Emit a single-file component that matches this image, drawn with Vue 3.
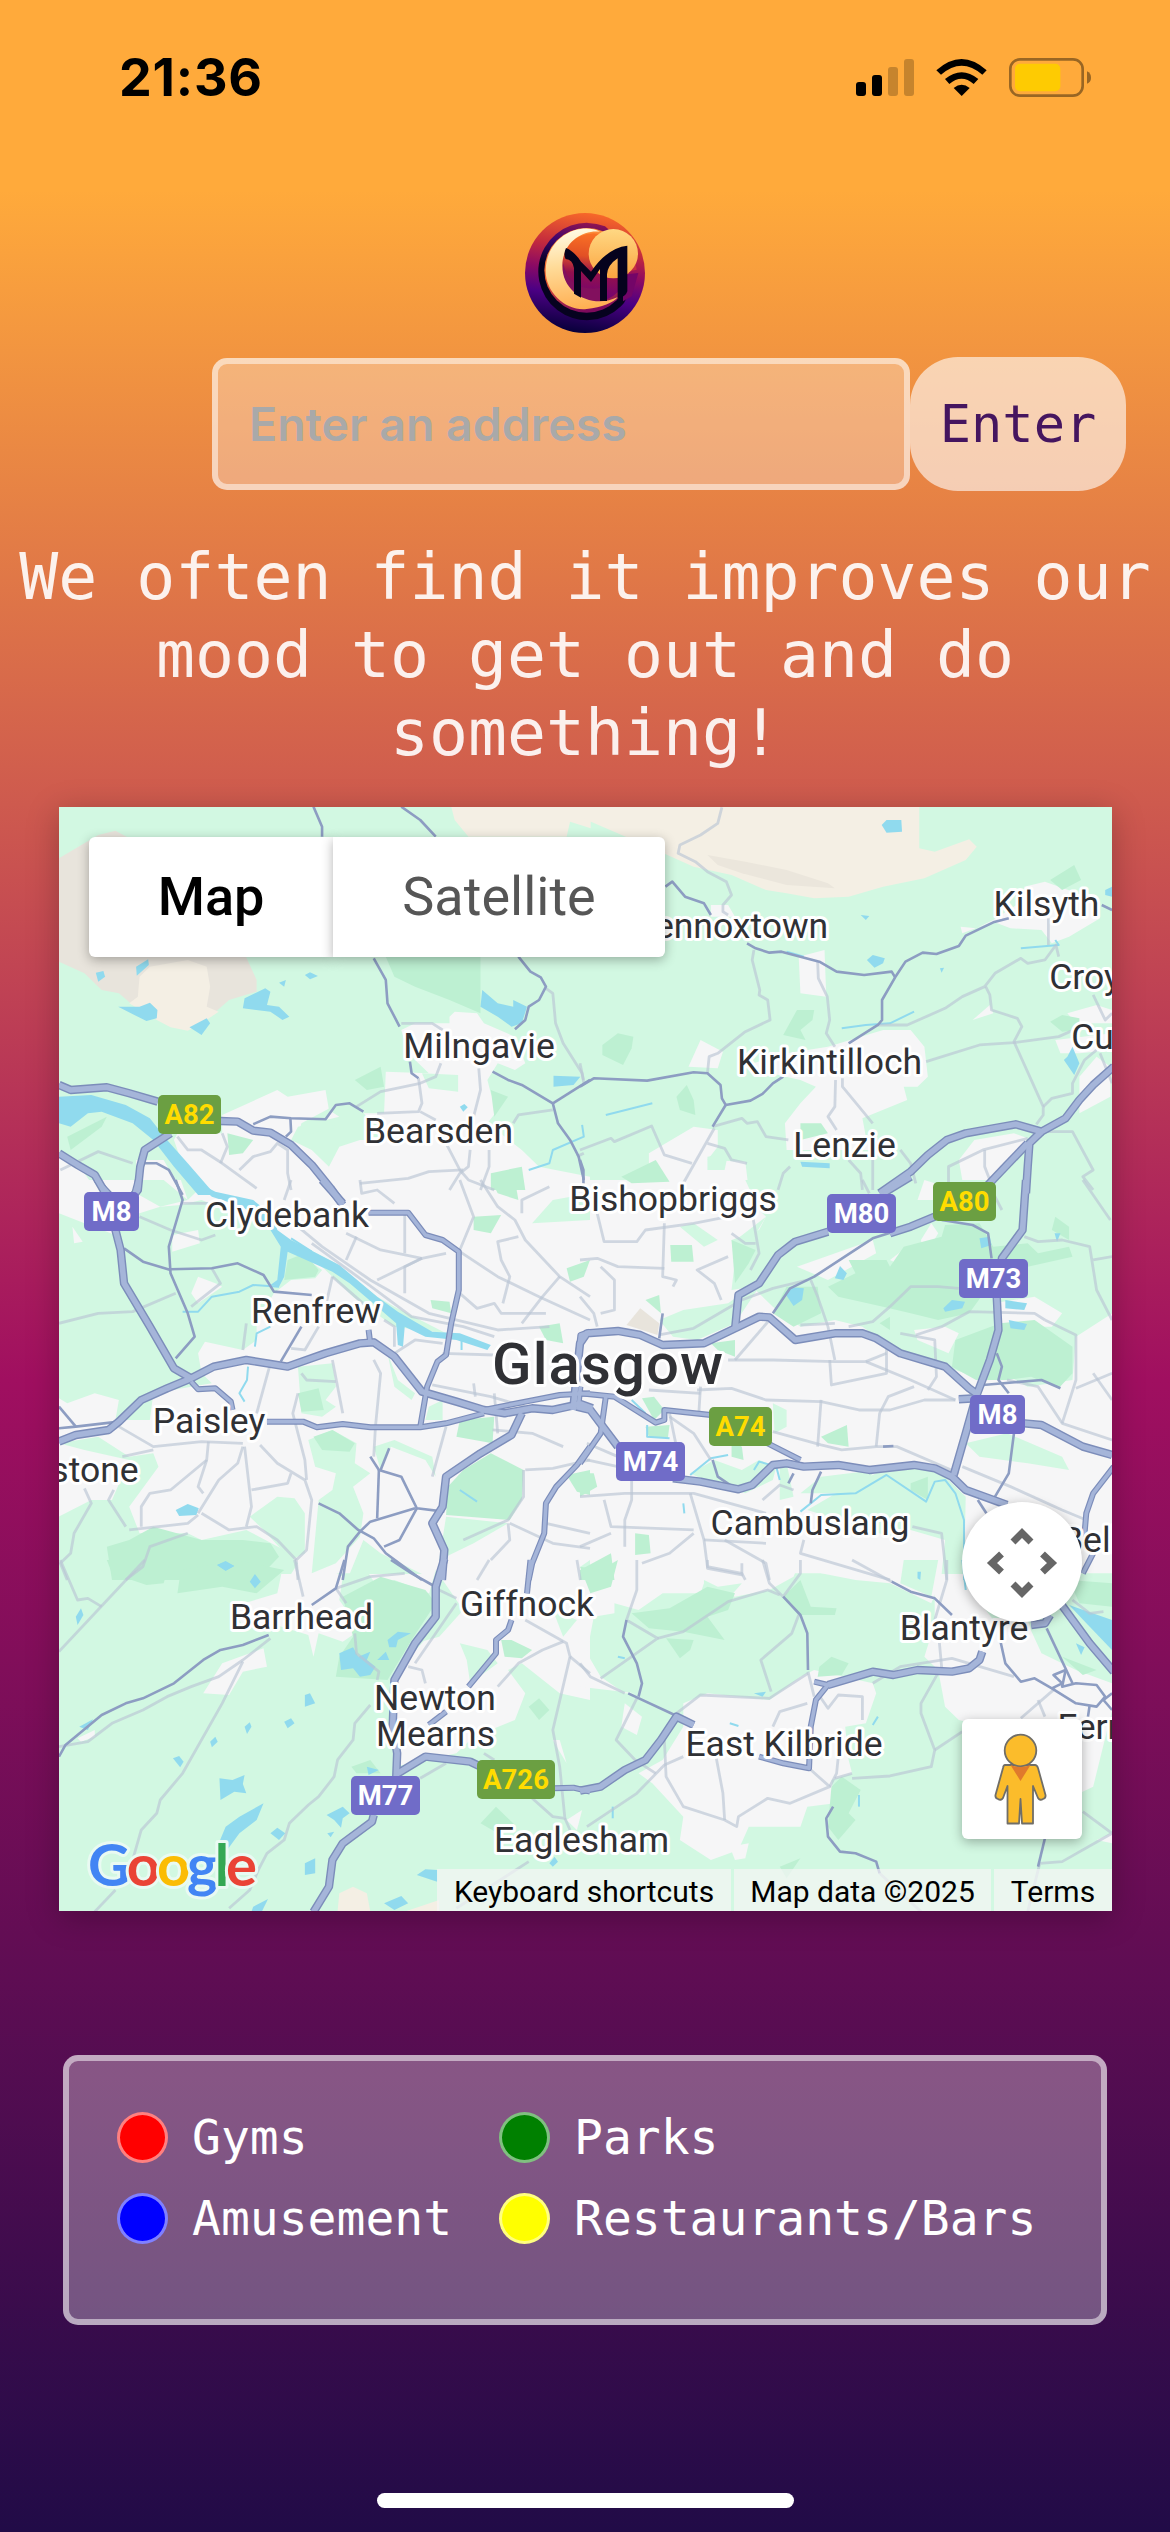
<script setup>
// Map sheets: every sheet holds its own shapes, in sheet units.
const sheets = [
  {
    id: 'nw', x: -9, y: -17,
    urban: ['1020,720 1060,700 1160,700 1160,680 1175,665 1240,670 1260,700 1350,740 1380,820 1350,840 1300,820 1270,870 1280,910 1300,960 1270,1000 1370,1080 1420,1130 1568,1160 1568,1200 810,1200 810,1130 840,1070 900,1050 1000,1050 910,970 970,970 975,845 1100,850 1040,790', '500,975 660,900 690,920 800,900 810,960 840,980 720,1010 700,1050 760,1080 810,1130 810,1200 490,1200 420,1180 380,1110 360,1050 370,1030 500,1030', '26,1100 80,1120 120,1180 200,1200 26,1200', '250,1110 330,1110 380,1200 250,1200'],
    green: ['1080,850 1185,855 1185,905 1100,895', '730,1000 820,950 800,1000 840,1010 720,1040'],
    park: ['975,500 1250,500 1250,670 1160,630 1060,590 1000,560', '885,870 960,830 970,890 920,900', '50,1040 165,980 150,1010 60,1080', '515,1030 590,1050 560,1090 520,1095', '1280,900 1330,920 1290,980', '1280,1150 1370,1130 1380,1200 1280,1200'],
    rock: ['26,205 140,135 190,122 240,150 560,480 600,570 600,605 520,630 470,675 440,690 240,645 200,610 150,600 100,550 26,515'],
    moor: ['290,530 400,510 455,530 465,590 455,650 490,665 440,700 400,722 350,712 310,690 230,640 255,620 260,560', '1165,50 1570,50 1570,115 1510,95 1500,140 1215,140 1175,90'],
    water: ['26,920 120,915 220,945 290,985 340,1050 400,1120 480,1215 430,1215 360,1130 300,1050 240,1000 150,965 110,970 60,1010 26,1000', '1255,600 1300,640 1345,650 1345,630 1385,650 1370,700 1340,710 1300,680 1250,650', '560,655 565,625 625,595 640,605 630,645 665,650 695,680 675,690 640,665', '198,650 260,650 290,638 312,660 310,685 280,693 245,675', '405,712 455,685 465,700 440,735', '250,530 285,508 287,525 252,557', '133,548 155,543 160,560 140,575', '740,555 755,547 778,558 755,568', '665,578 685,570 680,590', '1462,857 1540,860 1520,885 1462,890', '1190,950 1203,942 1213,952 1200,965'],
    stream: ['1545,1005 1550,1040 1460,1080 1450,1120 1390,1140'],
    local: ['1440,595 1460,610 1468,700 1490,760 1545,850 1550,880', '1020,700 1110,700 1140,720', '890,950 960,905 1075,880 1120,860 1135,820', '1070,865 1080,940 1070,965 950,970', '1075,965 1120,990', '1245,835 1250,900 1230,980', '1345,1000 1360,975 1460,960', '1150,1060 1190,1140 1215,1170 1290,1200', '1220,1080 1215,1130 1190,1150 1160,1200', '1275,1080 1275,1130 1250,1200', '900,1180 1040,1165 1100,1145 1200,1140', '370,1040 400,1080 440,1080 500,1120 560,1165 600,1195', '500,1030 515,1070 495,1120', '550,1140 590,1100 640,1085 660,1060 690,1080 690,1150 700,1200', '30,1140 140,1085 240,1120', '1550,1090 1530,1100'],
    minor: ['765,50 790,110 790,140', '1020,50 1075,90 1120,140', '940,505 975,570 980,640 1015,710', '1360,500 1395,545 1425,562 1440,590 1420,630 1390,650 1380,690 1350,718', '1045,815 1050,850 1070,865', '1285,845 1330,870 1370,885 1460,940 1475,1000 1510,1050 1535,1100 1550,1170', '1460,940 1568,870', '590,1003 640,980 700,985 800,988 830,945 870,940 910,965', '698,985 700,1025 685,1040', '255,1120 310,1120 345,1140 385,1215'],
    main: ['26,885 60,900 165,892 230,910 313,935', '495,993 545,995 590,1022 640,1028 700,1065 760,1125 815,1195 850,1245', '26,1090 80,1125 130,1155 155,1200 175,1240', '350,1030 275,1080 262,1130 255,1200 240,1220']
  },
  {
    id: 'ne', x: 521, y: -17,
    urban: ['380,345 430,345 450,380 380,380', '635,500 710,480 715,620 640,610', '1105,410 1150,415 1200,390 1290,330 1290,290 1350,275 1500,330 1510,385 1420,440 1370,460 1340,420 1250,415 1200,395 1110,430', '315,830 350,750 415,785 400,835', '470,830 600,790 720,770 880,720 960,720 1000,770 1010,860 980,890 940,890 950,930 820,985 830,1040 900,1080 600,1080 595,1000 640,940 685,890 640,870', '200,1090 330,1010 400,1020 400,1070 370,1110 480,1115 490,1200 200,1200', '1140,690 1190,645 1200,670', '1415,670 1500,645 1545,660 1545,700 1440,700', '1380,750 1545,730 1545,780 1450,790 1395,790', '1450,860 1500,800 1540,830 1540,920 1450,970', '1145,1050 1260,1030 1300,1045 1190,1175 1110,1170 1100,1110'],
    green: ['370,1100 430,1090 420,1140 370,1140'],
    park: ['65,765 110,730 155,740 150,775 125,825 65,795', '280,920 310,885 330,930 335,975 290,960', '630,660 680,660 675,690 640,720 655,750 590,735', '1365,270 1435,225 1455,270 1400,300', '1365,695 1400,675 1450,685 1450,720 1400,725', '640,1000 700,1000 720,1030 640,1050', '120,1160 220,1110 260,1175 150,1180'],
    rock: [],
    moor: ['-6,50 985,50 985,175 1030,185 1130,148 1152,170 1120,210 1000,265 880,290 780,320 680,325 600,310 540,300 440,255 330,230 200,170 20,90 -6,75'],
    ridge: ['370,195 480,215 600,240 720,280 740,295 600,285 470,250 400,225'],
    water: ['876,105 890,90 933,90 935,125 890,128', '833,510 850,495 885,505 880,520 855,533', '1415,800 1430,770 1450,820 1435,855 1405,810', '815,375 840,378 830,390', '640,1115 725,1120 725,1135 645,1130', '1525,300 1545,290 1545,320 1525,315', '1045,535 1057,533 1050,548'],
    stream: ['760,715 830,705 900,700 970,665', '75,975 210,940', '600,485 650,500', '1280,475 1390,465 1380,450'],
    local: ['412,52 400,100 350,135 290,165 285,190 335,215 370,245 425,275 440,315 415,345 415,365 430,375', '505,480 500,510 522,600 520,615 545,630 552,690 480,725 400,790 375,800 370,850', '690,515 692,565 718,620 725,690 715,730 740,770', '865,705 950,705 1060,655 1110,620 1175,590 1205,550 1280,505 1300,520 1350,510 1382,465 1390,500', '1178,590 1190,615 1195,660 1270,685 1283,710 1260,755 1345,950 1345,975 1325,1003', '1005,815 1160,765 1260,758 1390,740 1445,715', '1360,385 1360,465', '1345,950 1370,925 1430,910 1430,880 1465,810 1500,780', '1490,615 1525,690 1545,670', '742,870 740,950 720,980 745,1020', '762,865 762,890 810,950 850,1000', '385,1010 470,985 485,1000 515,995 540,1040 605,1050', '0,1080 90,1045 100,1055 208,1008 245,1095 325,1120', '390,1015 300,1180', '370,1060 420,1075 440,1110 485,1120', '610,1130 590,1150 575,1200', '780,1110 815,1150 820,1200', '850,1110 850,1200', '930,1080 960,1120 975,1180', '1070,1200 1070,1130 1170,1080 1300,1045', '1175,1080 1175,1130 1190,1170', '1340,1025 1430,1025 1490,1140 1460,1160 1490,1200', '0,820 10,870', '1510,790 1545,880'],
    minor: ['248,290 268,275 305,320 360,340 380,375', '485,460 510,475 550,488 585,485 695,515 745,545 825,555 905,545 915,562', '780,760 865,705 877,690 877,630 915,562 945,515 995,488 1035,492 1100,468 1120,437 1200,397 1245,385', '0,890 40,865 195,872 330,847 370,850 408,885 412,925 423,945 385,1010', '423,945 495,932 530,912 560,880 590,860', '1515,345 1545,360', '0,1110 10,1140 10,1200'],
    main: ['870,1210 960,1145 1010,1095 1065,1050 1120,1030 1200,1015 1265,1003 1340,1025 1410,985 1450,930 1490,885 1550,830', '1340,1025 1305,1060 1300,1130 1295,1210', '1300,1060 1240,1125 1180,1190']
  },
  {
    id: 'w', x: -9, y: 373,
    urban: ['26,0 1568,0 1568,1180 26,1180'],
    green: ['26,100 100,130 190,165 215,110 260,100 320,80 380,75 440,60 650,150 680,190 790,270 770,295 700,300 650,340 600,430 600,480 560,510 450,485 430,520 440,580 470,610 300,640 290,720 190,720 200,660 130,640 50,670 26,655', '250,0 330,0 400,60 320,80 250,40', '26,790 140,770 230,830 300,820 315,860 230,980 260,1060 400,1060 440,1080 570,1050 680,1110 720,1150 700,1182 26,1182 26,1010 120,960 180,960 230,840 100,810', '580,1010 660,950 710,955 740,1000 740,1120 700,1140 620,1050', '750,780 820,750 890,790 885,850 930,880 880,920 910,1000 900,1070 830,1150 760,1180 780,960 820,930 830,880 770,860', '940,800 1000,780 1110,830 1120,890 1090,840 990,800 960,870', '980,520 1010,600 1060,640 1050,660 1000,620', '1100,680 1140,660 1140,720 1090,720', '720,560 820,550 830,620 800,660 830,680 790,710 730,700', '1150,1010 1330,1030 1230,1090 1130,1140', '700,180 830,250 950,350 1000,380 1150,460 1000,440 880,350 800,270', '1400,130 1460,60 1568,40 1568,120', '400,0 440,20 400,60 380,0', '910,1080 960,1120 1080,1182 870,1182'],
    hole: ['355,165 430,150 435,190 355,215', '430,290 480,310 500,320 430,370 410,340', '65,140 95,185 70,190', '640,440 700,430 740,450 690,540 600,540'],
    park: ['1190,720 1290,710 1285,790 1180,770', '690,240 740,220 780,270 770,290 680,300', '1105,360 1160,365 1165,400 1110,385', '720,640 780,625 795,690 730,695', '1280,820 1375,870 1370,960 1335,1020 1150,1005 1155,920 1200,870', '165,1100 230,1080 300,1040 440,1080 560,1080 640,1090 665,1130 600,1200 180,1200', '765,770 820,750 885,790 870,815 790,810', '1500,885 1568,870 1568,945 1530,935', '1230,110 1310,105 1280,160 1230,150', '1500,265 1568,240 1550,290 1510,305', '1420,440 1480,430 1490,490 1440,480', '1280,0 1350,0 1360,60 1300,40'],
    rock: [], moor: [],
    water: ['415,0 480,35 590,60 650,110 660,150 700,180 840,255 950,350 1010,395 1110,455 1190,460 1280,495 1270,510 1180,480 1090,470 1030,440 1025,500 1010,495 1005,430 950,380 870,310 820,275 690,215 680,290 665,320 640,315 660,300 670,200 640,150 560,80 470,50', '365,990 400,972 432,985 425,1005 375,1008', '485,1155 510,1143 535,1158 510,1172'],
    stream: ['665,320 590,315 550,335 470,350 430,395 385,395', '640,440 600,460 595,500', '575,560 572,600 550,640 565,665', '1190,930 1240,965', '700,175 760,215', '1195,480 1195,510'],
    local: ['26,430 140,400 240,395 365,340', '380,70 460,70', '260,110 350,150 440,180 480,165', '470,265 495,310 410,380', '700,0 680,60', '720,140 790,200 930,300 1100,400 1300,450 1450,440', '760,190 920,310 1050,410 1200,440 1290,470', '900,0 905,40 950,30 1000,70', '1190,0 1230,110 1190,210', '1250,0 1300,80 1350,120 1380,180 1480,290 1568,350', '1190,215 1300,290 1420,350 1568,420', '890,170 860,240', '860,160 960,210 1080,235 1150,220', '1080,235 1030,260 1030,340', '1030,90 1030,220', '1080,235 950,300', '1360,170 1300,185 1310,240 1335,290 1315,370', '1480,290 1430,350 1370,430', '1370,100 1370,60 1450,20', '1190,340 1240,385 1290,370 1310,400 1440,400', '820,290 800,380', '820,290 920,380', '1000,520 1060,480 1140,490', '1110,615 1280,650 1380,680', '1140,520 1290,525', '820,540 850,700', '940,540 960,580 945,740 940,830', '640,550 600,700', '570,430 560,510', '780,440 740,510 700,505', '730,580 745,600 830,605', '720,640 705,700 740,840 745,900', '200,740 300,800 440,785 560,790', '210,830 300,810', '460,785 455,840 350,930 290,940 265,980 265,1040', '455,840 430,920 445,940', '560,800 545,850 490,900 430,1000', '565,800 585,980 570,1040', '610,795 660,850 740,900 760,960 745,1110 715,1140 720,1200', '440,1000 520,1050 600,1040 660,1080 715,1140', '230,1050 400,1030 430,1005', '100,925 120,970 70,1060 60,1120 30,1150 50,1200', '185,930 170,960 220,1040', '400,1060 290,1100 270,1160 220,1200', '585,930 690,910 700,880', '1150,740 1110,890', '1285,750 1400,760 1490,800', '1380,870 1460,865 1568,840', '1375,870 1375,950 1330,1020 1200,1080', '1335,1030 1460,1090 1568,1105', '1330,1030 1335,1080 1280,1140', '1440,1030 1568,1060', '970,420 1000,440 1000,500', '1230,610 1235,650', '1290,640 1300,760'],
    minor: ['350,268 470,265 545,250 620,285 650,335 760,345', '215,205 270,245 350,270', '365,0 385,60 345,200 350,280 400,400 420,470 365,535', '730,440 670,545', '930,830 955,870 1020,890 1065,985 1145,995', '955,870 950,1015', '780,970 840,1000 895,1050 940,1075 975,1120 1080,1200', '1060,985 930,1025 900,1055 865,1100 850,1200', '26,745 75,740 200,725', '26,680 75,740', '960,870 985,805', '1065,985 1015,1080 970,1100'],
    main: ['190,150 205,210 215,310 290,440 360,565 410,595 475,560 570,540 690,560 800,520 900,490 940,487 1000,530 1080,635 1180,665 1260,690 1320,700 1400,685 1460,690 1540,672 1575,685', '26,785 75,765 170,750 200,725 265,660 340,625 410,595', '790,0 850,70', '1370,700 1340,765 1250,820 1150,890 1140,980 1110,1030 1145,1110 1138,1200'],
    trunk: ['410,605 430,628 480,625 525,665 530,690', '630,725 735,725 775,742 850,732 930,742 1075,742 1150,730 1260,700', '925,98 1040,98 1090,165 1140,180 1187,215 1187,330 1165,430 1150,525 1125,545 1095,620 1075,740', '1568,800 1530,855 1470,920 1440,970 1435,1060 1400,1150 1390,1200', '1260,690 1380,665 1480,645 1568,640', '1540,620 1535,670', '1568,455 1540,465 1535,510', '925,450 930,490', '135,0 180,50', '255,0 245,40']
  },
  {
    id: 'e', x: 521, y: 373,
    urban: ['0,0 1545,0 1545,1180 0,1180'],
    green: ['430,0 1545,0 1545,400 1440,470 1430,600 1300,620 1230,580 1180,600 1060,560 900,500 820,440 740,420 640,440 560,380 500,320 440,330 450,240 440,180 520,150 540,110', '290,140 330,130 400,180 360,200', '230,420 300,390 430,370 540,290 450,430 340,480 270,470', '560,670 600,690 600,740 565,760', '320,880 390,840 470,870 520,840 570,860 560,900 480,940 360,900', '660,990 760,930 860,880 1000,860 1050,880 1120,950 1115,1182 1050,1182 1060,1080 960,1050 900,1070 690,1000', '640,940 700,890 860,870 800,940', '1120,790 1240,760 1400,830 1420,870 1300,850 1160,830', '500,180 440,190 540,110', '580,860 600,850 620,950 580,960'],
    hole: ['630,260 850,180 860,220 720,300', '900,240 950,200 960,270', '1200,370 1320,350 1400,400 1370,440 1220,440', '970,450 1060,440 1100,460 1070,520 980,480', '430,0 480,0 520,90 440,140 400,110', '1000,0 1030,10 1030,60 980,60', '990,180 1020,130 1040,160 1000,230'],
    park: ['262,195 325,195 330,245 265,245', '440,180 510,210 490,250 450,310', '380,490 450,480 450,530 400,510', '180,655 215,650 245,690 215,720', '190,740 260,735 255,775 200,770', '700,770 775,735 780,800 720,790', '440,780 470,800 475,840 440,830', '0,880 40,880 50,920 0,950', '160,1060 200,1065 205,1120 160,1125', '0,1170 90,1120 100,1200 0,1200', '720,320 800,280 780,240 890,240 900,260 940,200 1050,170 1060,135 1160,130 1200,200 1300,190 1330,220 1420,200 1430,230 1300,260 1200,300 1130,400 1040,420 960,400 880,380 750,350', '1090,480 1220,430 1320,420 1430,500 1430,580 1390,625 1310,590 1240,600 1150,600 1080,560', '560,400 600,320 690,320 700,400 620,440', '960,910 1010,890 1010,960 960,930', '1380,110 1420,140 1420,180 1370,150', '870,430 900,410 900,450', '190,360 230,345 235,400'],
    rock: ['135,435 175,385 230,430 225,465'], moor: [],
    water: ['595,340 610,322 650,325 645,360 620,378', '740,295 755,258 775,280 765,300', '1160,175 1190,170 1195,195 1165,205', '1055,385 1080,360 1118,365 1110,385 1060,395', '1235,360 1298,370 1290,390 1235,385', '1245,420 1298,432 1290,450 1250,445', '1378,160 1395,160 1385,185'],
    stream: ['640,995 700,945 800,940 890,885 1005,965 1030,905 1060,900 1090,940 1115,1020 1115,1200', '320,885 380,835 430,825', '150,660 190,700', '195,735 195,770 260,775', '505,870 520,845 570,860 580,900', '300,970 303,1000'],
    local: ['245,130 240,290 280,300 270,320', '500,100 520,220 495,270', '0,240 50,235 110,260 245,265', '50,100 70,185 165,185 190,150 330,130 430,110', '60,260 100,300 100,390 60,400', '0,350 40,400 50,440', '440,160 480,190 510,190', '430,230 340,270 390,310 410,360', '670,300 690,350 720,440 740,540', '550,420 450,540', '430,540 560,540 740,545 830,545 960,600 1090,660', '230,465 330,445 470,360 560,325 660,300', '900,380 960,320 1040,320 1100,325', '780,440 850,425 900,380', '975,465 1050,440 1130,395 1320,400 1350,420', '640,435 740,430', '830,545 890,520', '890,500 890,580 730,615 725,540', '340,630 440,625 540,660 700,665 810,690 900,690 1000,660 1090,660', '970,620 895,650 870,700 860,800', '700,660 690,800', '560,755 700,795 760,810 860,800 920,800 1100,880', '930,460 1030,480 1035,590 1010,630', '1290,170 1330,185 1400,180 1480,200 1500,330 1545,420', '1490,240 1545,230', '1350,420 1440,465 1440,600 1400,730', '1440,625 1545,580', '1490,580 1545,660', '1110,860 1250,920 1400,990 1470,1020', '1240,600 1330,620 1400,730 1545,780', '0,950 130,940 330,940 540,1000', '150,900 150,960 130,1020 130,1100', '320,940 360,1080 370,1160 470,1180 480,1200', '70,960 90,1040 330,1050', '360,1080 540,1090', '420,1080 540,1150 550,1200', '650,1080 640,1120 900,1200', '530,960 580,915 620,930', '965,1040 1050,1060 1065,1200', '0,1100 90,1060', '180,1150 260,1120 330,1060', '350,620 345,700', '200,630 350,640', '260,710 330,760 380,840', '260,700 280,800', '20,790 110,830', '20,840 110,860', '1460,0 1540,120', '820,0 840,40', '1200,40 1225,90'],
    minor: ['910,155 850,175 680,290 610,325 560,400', '230,475 240,400', '385,840 400,890 450,925', '700,875 675,930 670,970', '1170,615 1340,600 1395,625', '1210,520 1225,560 1215,600 1245,640', '1260,760 1245,880 1205,950', '1050,120 1140,135 1185,160 1195,235', '1155,960 1180,1000', '620,880 605,910', '880,800 910,798'],
    main: ['-20,690 0,490 20,460 110,453 175,465 240,495 360,490 440,450 520,410 550,412 625,480 740,460 820,460 860,475 930,520 1060,560 1130,625 1150,640', '450,450 460,345 520,310 575,225 625,185 720,155', '880,40 960,-10', '900,160 960,140 1030,110', '1295,0 1285,150 1225,235 1210,350 1215,450 1190,540 1150,650 1120,760 1085,885', '1290,730 1340,735 1460,800 1545,825', '-10,680 30,690 110,800', '270,895 350,905 460,928 500,915 560,855 600,850 650,860 750,855 840,870 970,855 1030,865 1080,890 1120,930 1240,975', '1100,658 1150,655'],
    trunk: ['0,640 100,650 220,728 245,720 245,690 380,705', '545,790 640,840', '1550,860 1490,940 1470,1000 1465,1060 1490,1120 1460,1180', '75,650 60,760 0,850', '1190,20 1180,30']
  },
  {
    id: 'sw', x: -9, y: 753,
    urban: ['680,0 770,0 850,50 840,120 900,210 850,245 780,220 765,290 750,225 640,190 560,200 530,140 660,100', '900,0 1568,0 1568,420 1480,400 1370,310 1330,330 1380,400 1350,480 1230,530 1180,580 1000,620 1000,360 1020,320 1130,190 1100,100 1000,60 950,80', '500,310 620,265 630,320 560,335 520,405 445,400', '80,535 130,510 130,530 90,545', '1500,780 1545,750 1530,810', '1460,540 1480,540 1500,610'],
    green: ['1190,250 1270,270 1300,310 1220,370 1210,300', '1460,150 1530,180 1490,230', '1120,30 1200,150 1130,230 1060,250', '1540,20 1568,0 1568,80'],
    park: ['165,0 350,0 330,70 280,75 180,40', '380,30 540,0 680,30 600,100 500,80 370,100', '1390,440 1420,415 1450,450 1420,480', '1250,790 1295,740 1350,795 1300,820', '875,620 930,600 960,640 890,640', '850,110 960,50 1090,90 1120,130 1050,240 980,360 830,350 840,290 880,230', '1310,240 1340,240 1400,270 1370,295 1320,290'],
    rock: [], moor: ['840,1000 880,980 920,1000 930,1055 835,1055', '1030,1055 1130,1020 1130,1055'],
    water: ['840,280 880,262 895,290 930,275 920,300 945,320 930,345 900,350 880,325 845,330', '980,240 1010,215 1048,220 1010,240 1005,262 985,262', '950,300 975,275 985,300', '740,405 755,400 770,430 740,440', '680,485 700,475 710,490 690,505', '565,500 580,487 585,500 572,522', '465,545 480,530 487,545 470,562', '357,595 375,588 388,605 378,622', '492,655 530,660 565,645 560,672 570,700 535,695 495,720', '490,850 510,800 550,770 620,730 600,780 550,820 500,890', '803,765 850,740 870,760 850,775 845,803 825,780', '640,820 660,803 683,820 665,840', '740,910 770,895 770,940 740,945', '1065,945 1090,928 1124,930 1124,965', '970,1030 1020,1008 1040,1030 1000,1050', '590,1040 633,1017 615,1055 585,1055', '485,15 510,5 535,18 510,32', '580,65 595,42 612,65 595,85', '75,170 90,145 97,165 80,195', '85,500 125,478 110,510', '920,620 955,630 925,645', '805,820 825,815 815,832', '1450,910 1465,890 1475,905 1460,920'],
    stream: [],
    local: ['26,560 110,545 180,490 270,450 340,410 410,380 490,350 560,300 640,235', '30,0 80,120 110,115 150,140', '275,0 26,275', '560,305 500,430 385,640 320,720 310,760 265,810 240,900', '710,0 735,110', '830,85 930,50 1030,40', '830,85 860,130', '885,220 890,280 955,335 950,360', '930,435 885,490 880,540 835,600 825,650 780,710 750,735 695,790 680,840 630,880 605,930 580,990 520,1045', '190,990 130,1055', '1075,655 1150,610', '1260,580 1290,600', '1400,715 1460,770 1495,775 1480,620 1460,510 1485,400 1510,290 1500,250 1380,180', '1495,775 1510,810', '1180,130 1060,310', '1490,245 1430,270 1360,310 1300,380', '1390,905 1180,1045', '1040,320 1080,330 1090,370', '1510,290 1568,340', '1530,0 1540,60', '1110,80 1180,115', '1275,0 1240,60'],
    minor: ['855,0 830,85 760,135', '990,0 1050,40 1110,75', '26,590 45,555 150,465 220,430 270,415 360,370 445,300 495,270 560,255 635,225'],
    main: ['1145,-4 1120,80 1120,170 1060,250 1000,360 995,500 1008,580 1005,660', '940,765 935,785 850,850 820,900 810,980 765,1056', '1010,640 1090,590 1220,605 1260,625'],
    trunk: ['1460,685 1520,683 1568,695', '1395,0 1385,100', '1340,180 1330,210 1295,240 1295,280 1215,380', '1150,455 1100,495']
  },
  {
    id: 'se', x: 521, y: 753,
    urban: ['0,0 640,0 620,50 550,90 450,110 360,70 350,100 240,100 170,150 100,130 100,160 40,170 20,280 60,350 130,400 160,400 0,380', '300,430 370,400 550,420 640,350 680,330 850,370 860,400 830,490 770,500 780,600 790,640 730,660 740,730 660,740 640,800 490,800 460,870 380,900 290,840 300,770 210,670 170,640 240,600 300,500', '1030,30 1110,0 1130,80 1200,180 1300,190 1340,280 1440,330 1545,370 1545,450 1490,680 1450,700 1400,560 1100,480 1060,440 1040,330 1000,290 1030,190', '660,0 1080,0 1040,80 1020,130 900,70 800,60 700,40', '130,430 180,470 165,525 120,500', '435,860 490,850 480,895 450,900', '1500,840 1545,820 1545,850'],
    green: ['360,60 400,80 470,70 440,105 360,100', '940,0 1040,0 1020,110 930,70'],
    park: ['150,160 260,145 370,80 450,100 430,150 370,170 420,240 300,215 200,205', '590,110 640,60 670,140 745,145 740,165 640,165', '250,235 330,240 320,270 290,295', '695,320 730,290 780,310 760,345 690,350', '730,680 760,650 815,690 780,760 800,780 750,840 720,800', '580,920 640,895 600,955', '0,20 60,30 110,0 90,80 30,100', '1420,60 1545,70 1545,140 1450,130', '1400,290 1500,330 1460,345'],
    rock: [], moor: [],
    water: ['1420,135 1545,180 1545,270 1480,200', '1440,250 1465,262 1455,285', '505,400 540,395 530,410', '980,35 990,35 988,60 980,55'],
    stream: ['1110,0 1120,90', '850,495 865,470', '95,740 95,775', '810,705 810,740', '435,490 460,498', '110,290 130,295'],
    local: ['165,0 165,90 135,180 225,235 150,290 60,355', '225,235 300,215 430,125 545,90 580,105', '370,0 370,25 470,45 470,10', '530,0 550,70 590,110 640,40 640,0', '635,165 615,220 525,300 555,395', '0,310 30,350 130,400', '165,415 105,540 160,600 220,640', '280,460 350,405 550,415 662,340', '660,430 580,455 560,500', '690,400 720,445 750,405 820,410 820,480', '245,540 250,650 300,740 420,780 455,800 460,770 545,715 610,730 725,680 665,625', '395,590 415,700 420,780', '725,680 745,640 750,590', '790,655 900,648 1020,620 1030,570 990,460 990,430 1050,320 1040,210', '1030,570 1110,515', '850,370 930,320 1080,295 1260,350', '1065,0 1065,60 1030,180', '300,590 245,615 165,700 20,800', '1280,475 1380,385', '1330,420 1350,470', '1460,755 1545,820 1400,905 1335,910 1300,1055', '870,940 990,1055', '1430,120 1480,160 1520,155', '790,0 905,65', '662,335 680,410', '740,655 790,640'],
    minor: ['590,110 640,165 660,220 662,330', '905,65 960,95 1030,115 1080,165', '135,180 125,230 165,310 180,370 170,410', '140,400 275,465', '735,740 715,775 720,830 755,875 800,880 860,905 870,940', '1220,240 1235,310 1280,365 1320,355 1370,385 1400,370 1375,345 1410,330 1400,380 1440,370 1500,375 1525,410 1500,440 1440,430 1370,385', '1355,205 1430,370', '1350,835 1330,920', '1480,435 1475,470', '1545,400 1520,420 1545,450'],
    main: ['330,495 280,470 235,540 190,600 130,630 60,680 0,692', '720,375 850,335 910,345 980,330 1080,335 1130,325 1160,300 1168,275', '1310,195 1350,190 1365,165', '1395,130 1480,250 1550,335'],
    trunk: ['520,590 590,610 665,625 670,500 685,420 720,375 680,365']
  }
]

const place = (s) => `translate(${s.x} ${s.y}) scale(0.3444 0.3333)`
const landKinds = ['urban', 'green', 'hole', 'park', 'rock', 'moor', 'ridge', 'water']
const roadKinds = ['stream', 'local', 'minor', 'trunk-edge', 'main-edge', 'trunk', 'main']
const lines = (s, kind) => s[kind.replace('-edge', '')] || []

// Town names: centre x and baseline, in map pixels.
const towns = [
  { n: 'Lennoxtown', x: 673, y: 131 },
  { n: 'Kilsyth', x: 987.5, y: 109 },
  { n: 'Croy', x: 1026, y: 182 },
  { n: 'Cumbernauld', x: 1118, y: 242 },
  { n: 'Milngavie', x: 420, y: 251 },
  { n: 'Kirkintilloch', x: 770.5, y: 267 },
  { n: 'Bearsden', x: 379.5, y: 336 },
  { n: 'Lenzie', x: 785.5, y: 350 },
  { n: 'Bishopbriggs', x: 614, y: 404 },
  { n: 'Clydebank', x: 228, y: 420 },
  { n: 'Renfrew', x: 257, y: 516 },
  { n: 'Paisley', x: 150, y: 626 },
  { n: 'Johnstone', x: -4, y: 675 },
  { n: 'Cambuslang', x: 751, y: 728 },
  { n: 'Bellshill', x: 1063, y: 745 },
  { n: 'Giffnock', x: 468, y: 809 },
  { n: 'Barrhead', x: 242.5, y: 822 },
  { n: 'Blantyre', x: 905, y: 833 },
  { n: 'Newton', x: 376, y: 903 },
  { n: 'Mearns', x: 376.5, y: 939 },
  { n: 'Ferniegair', x: 1077, y: 932 },
  { n: 'East Kilbride', x: 725, y: 949 },
  { n: 'Eaglesham', x: 522.5, y: 1045 }
]

const shields = [
  { n: 'A82', x: 99, y: 288, w: 63, a: true },
  { n: 'M8', x: 25, y: 385, w: 55 },
  { n: 'M80', x: 768, y: 387, w: 69 },
  { n: 'A80', x: 874, y: 375, w: 63, a: true },
  { n: 'M73', x: 900, y: 452, w: 69 },
  { n: 'M8', x: 911, y: 588, w: 55 },
  { n: 'A74', x: 650, y: 600, w: 63, a: true },
  { n: 'M74', x: 557, y: 635, w: 69 },
  { n: 'M77', x: 292, y: 969, w: 69 },
  { n: 'A726', x: 418, y: 953, w: 78, a: true }
]

const legend = [
  { name: 'Gyms', color: 'red' },
  { name: 'Parks', color: 'green' },
  { name: 'Amusement', color: 'blue' },
  { name: 'Restaurants/Bars', color: 'yellow' }
]
</script>

<template>
  <div class="screen">
    <header class="status">
      <span class="time">21:36</span>
      <svg class="status-icons" viewBox="0 0 810 240">
        <rect x="48" y="126" width="30" height="42" rx="9" />
        <rect x="96" y="105" width="30" height="63" rx="9" />
        <g opacity=".22">
          <rect x="144" y="81" width="30" height="87" rx="9" />
          <rect x="192" y="57" width="30" height="111" rx="9" />
        </g>
        <path d="M289 91Q365 23 440 91L427 104Q365 50 303 104Z" />
        <path d="M315 117Q365 76 415 117L401 132Q365 101 328 132Z" />
        <path d="M341 144Q365 124 389 144L365 168Z" />
        <rect x="511" y="58" width="217" height="109" rx="29" fill="none" stroke="#000" stroke-opacity=".4" stroke-width="8" />
        <rect x="525" y="71" width="136" height="83" rx="15" fill="#fecb02" />
        <path d="M741 94Q753 99 753 113Q753 126 741 131Z" opacity=".4" />
      </svg>
    </header>

    <svg class="logo" viewBox="0 0 360 360">
      <defs>
        <linearGradient id="ring" x1=".6" y1="0" x2=".45" y2="1">
          <stop offset="0" stop-color="#f96a28" /><stop offset=".3" stop-color="#c32a3d" />
          <stop offset=".5" stop-color="#8c0a63" /><stop offset=".7" stop-color="#4c0084" />
          <stop offset="1" stop-color="#07003a" />
        </linearGradient>
        <linearGradient id="edge" x1=".5" y1="0" x2=".4" y2="1">
          <stop offset="0" stop-color="#8e1353" /><stop offset=".2" stop-color="#3a046d" />
          <stop offset=".45" stop-color="#06021f" /><stop offset="1" stop-color="#06021f" />
        </linearGradient>
        <linearGradient id="glow" x1=".2" y1="0" x2=".4" y2="1">
          <stop offset="0" stop-color="#ff9a3c" /><stop offset=".55" stop-color="#ef5a2c" />
          <stop offset="1" stop-color="#7d0a5d" />
        </linearGradient>
        <linearGradient id="core" x1=".6" y1="0" x2=".5" y2="1">
          <stop offset="0" stop-color="#fb7325" /><stop offset=".35" stop-color="#e25025" />
          <stop offset=".6" stop-color="#93104e" /><stop offset="1" stop-color="#6c0078" />
        </linearGradient>
        <linearGradient id="moon" x1=".4" y1="0" x2=".5" y2="1">
          <stop offset="0" stop-color="#fffbe5" /><stop offset=".45" stop-color="#ffdb98" />
          <stop offset="1" stop-color="#ffae51" />
        </linearGradient>
        <linearGradient id="sun" x1=".5" y1="0" x2=".5" y2="1">
          <stop offset="0" stop-color="#ffd883" /><stop offset="1" stop-color="#fba440" />
        </linearGradient>
      </defs>
      <circle cx="180" cy="180" r="180" fill="url(#ring)" />
      <path d="M240 40A146 146 0 1 0 288 280Q308 262 308 230V100Z" fill="url(#edge)" />
      <circle cx="185" cy="172" r="127" fill="url(#glow)" />
      <circle cx="206" cy="164" r="103" fill="url(#core)" />
      <path d="M115 150Q130 245 245 222L240 265H160L112 220Z" fill="#82105e" />
      <path d="M286 180L335 170Q330 120 300 80L286 100Z" fill="#c52e41" />
      <path d="M294 185L340 180L320 250L294 265Z" fill="#730568" />
      <circle cx="265" cy="122" r="74" fill="url(#sun)" />
      <path d="M225 56C165 25 65 70 62 170C60 240 125 295 185 288C230 284 266 268 279 252C205 288 112 244 112 158C112 95 165 50 225 56Z" fill="url(#moon)" />
      <path d="M123 105Q148 115 168 146L198 176Q248 104 307 98V235Q302 252 278 256V136Q248 156 246 184V264H225V168L198 207L168 174V254L147 242V165Q143 140 122 138Q114 124 123 105Z" fill="#05021d" />
    </svg>

    <form class="search" @submit.prevent>
      <input class="address" type="text" placeholder="Enter an address" />
      <button class="enter" type="submit">Enter</button>
    </form>

    <h1 class="tagline">We often find it improves our mood to get out and do something!</h1>

    <section class="map">
      <svg class="canvas" viewBox="0 0 1053 1104">
        <g v-for="kind in landKinds" :key="kind" :class="kind">
          <g v-for="s in sheets" :key="s.id" :transform="place(s)">
            <polygon v-for="(p, i) in s[kind] || []" :key="i" :points="p" />
          </g>
        </g>
        <g v-for="kind in roadKinds" :key="kind" :class="['line', kind]">
          <g v-for="s in sheets" :key="s.id" :transform="place(s)">
            <polyline v-for="(p, i) in lines(s, kind)" :key="i" :points="p" />
          </g>
        </g>
        <g class="towns">
          <text v-for="t in towns" :key="t.n" :x="t.x" :y="t.y">{{ t.n }}</text>
          <text class="city" x="548.5" y="577" textLength="231">Glasgow</text>
        </g>
        <g v-for="(s, i) in shields" :key="i" :class="['shield', { primary: s.a }]">
          <rect :x="s.x" :y="s.y" :width="s.w" height="39" rx="5" />
          <text :x="s.x + s.w / 2" :y="s.y + 29">{{ s.n }}</text>
        </g>
        <g class="brand">
          <text x="29" y="1079" textLength="169"><tspan fill="#4285f4">G</tspan><tspan fill="#ea4335">o</tspan><tspan fill="#fbbc04">o</tspan><tspan fill="#4285f4">g</tspan><tspan fill="#34a853">l</tspan><tspan fill="#ea4335">e</tspan></text>
        </g>
      </svg>

      <div class="types">
        <button class="type active">Map</button>
        <button class="type">Satellite</button>
      </div>

      <button class="pan">
        <svg viewBox="0 0 120 120">
          <path d="M51 40L60 31L69 40M51 82L60 91L69 82M39.500 52L30 61L39.500 70M80.500 52L90 61L80.500 70" fill="none" stroke="#666" stroke-width="7" />
        </svg>
      </button>

      <button class="pegman">
        <svg viewBox="0 0 120 120">
          <g fill="#fbbc2b" stroke="#706e68" stroke-width="1.800" stroke-linejoin="round">
            <path d="M43 46H73Q75 46 76 49L83.500 76Q84 79 81 80Q78 82 76 79L71 67V104.500H60L58.500 80L57 104.500H45.500V67L41 79Q39 82 36 80Q33 79 33.500 76L41 49Q41.500 46 43 46Z" />
            <circle cx="58.500" cy="31.500" r="15.800" />
          </g>
          <path d="M48.500 46Q58.500 50 68.500 46L58.500 62Z" fill="#e07a2c" />
        </svg>
      </button>

      <div class="credits">
        <span class="keys">Keyboard shortcuts</span>
        <span class="data">Map data ©2025</span>
        <span class="terms">Terms</span>
      </div>
    </section>

    <section class="legend">
      <div v-for="item in legend" :key="item.name" class="item">
        <i class="dot" :style="{ backgroundColor: item.color }"></i>
        <span>{{ item.name }}</span>
      </div>
    </section>

    <div class="home"></div>
  </div>
</template>

<style>
body {
  margin: 0;
}
</style>

<style scoped>
.screen {
  box-sizing: border-box;
  width: 1170px;
  height: 2532px;
  overflow: hidden;
  display: flex;
  flex-direction: column;
  align-items: center;
  background: linear-gradient(#ffaa3b 190px, #a00f60 1380px, #210b47 2532px);
  font-family: "DejaVu Sans Mono", monospace;
}
button {
  border: 0;
  padding: 0;
  margin: 0;
}
.status {
  align-self: stretch;
  display: flex;
  justify-content: space-between;
  height: 173px;
  padding: 40px 60px 0 119px;
  box-sizing: content-box;
}
.time {
  font: 700 52px/76px Inter, sans-serif;
  letter-spacing: 0.8px;
  color: #000;
}
.status-icons {
  width: 270px;
  height: 80px;
}
.logo {
  width: 120px;
  height: 120px;
  flex: none;
}
.search {
  align-self: flex-end;
  display: flex;
  align-items: center;
  margin: 24px 44px 0 0;
}
.address {
  box-sizing: border-box;
  width: 698px;
  height: 132px;
  padding: 0 31px;
  border: 6px solid rgba(255, 255, 255, 0.5);
  border-radius: 15px;
  background: rgba(255, 255, 255, 0.3);
  font: 600 46.500px Inter, sans-serif;
}
.address::placeholder {
  color: #a9a9a9;
  opacity: 1;
}
.enter {
  width: 216px;
  height: 134px;
  border-radius: 48px;
  background: rgba(255, 255, 255, 0.6);
  color: #45155f;
  font: 52px "DejaVu Sans Mono", monospace;
}
.tagline {
  width: 1140px;
  margin: 47px 0 35px;
  font-weight: 400;
  font-size: 64.800px;
  line-height: 78px;
  text-align: center;
  color: rgba(255, 255, 255, 0.9);
}
.map {
  position: relative;
  width: 1053px;
  height: 1104px;
  flex: none;
  margin-left: 1px;
  box-shadow: 0 6px 30px rgba(0, 0, 0, 0.25);
  font-family: Roboto, sans-serif;
}
.canvas {
  display: block;
  width: 1053px;
  height: 1104px;
  background: #d2f8e2;
}
.urban, .hole { fill: #f6f6f7; }
.green { fill: #d2f8e2; }
.park { fill: #bdf0d2; }
.rock { fill: #e8e4dc; }
.moor { fill: #f4efe4; }
.ridge { fill: #ebe6dc; }
.water { fill: #90daee; }
.line {
  fill: none;
  stroke-linejoin: round;
}
.line polyline { vector-effect: non-scaling-stroke; }
.stream { stroke: #90daee; stroke-width: 2; }
.local { stroke: #bac5d4; stroke-opacity: 0.65; stroke-width: 2.800; }
.minor { stroke: #8d9dc2; stroke-width: 2.600; }
.main-edge { stroke: #7c8dba; stroke-width: 8.400; }
.main { stroke: #a5b5d9; stroke-width: 5.600; }
.trunk-edge { stroke: #7c8dba; stroke-width: 6; }
.trunk { stroke: #a5b5d9; stroke-width: 3.600; }
.towns {
  font-size: 35.500px;
  text-anchor: middle;
  fill: #303135;
  stroke: #fff;
  stroke-width: 6px;
  stroke-linejoin: round;
  paint-order: stroke;
}
.city {
  font-size: 58px;
  font-weight: 500;
}
.shield rect { fill: #706cc8; }
.shield.primary rect { fill: #6b9f42; }
.shield text {
  font-size: 27.500px;
  font-weight: 700;
  text-anchor: middle;
  fill: #fff;
}
.shield.primary text { fill: #ffdc00; }
.brand {
  font-family: Lato, sans-serif;
  font-size: 58px;
  font-weight: 700;
  stroke: #e9faf2;
  stroke-width: 6px;
  stroke-linejoin: round;
  paint-order: stroke;
}
.types {
  position: absolute;
  left: 30px;
  top: 30px;
  display: flex;
}
.type {
  width: 332px;
  height: 120px;
  padding-bottom: 2px;
  border-radius: 0 6px 6px 0;
  background: #fff;
  box-shadow: 0 3px 12px rgba(0, 0, 0, 0.3);
  font: 54px Roboto, sans-serif;
  color: #565656;
}
.type.active {
  width: 244px;
  border-radius: 6px 0 0 6px;
  font-weight: 500;
  color: #000;
}
.pan,
.pegman {
  position: absolute;
  right: 30px;
  width: 120px;
  height: 120px;
  background: #fff;
  box-shadow: 0 3px 12px rgba(0, 0, 0, 0.3);
}
.pan {
  top: 695px;
  border-radius: 50%;
}
.pegman {
  top: 912px;
  border-radius: 6px;
}
.pan svg,
.pegman svg {
  display: block;
}
.credits {
  position: absolute;
  right: 0;
  bottom: 0;
  display: flex;
  gap: 3px;
  font-size: 30px;
  line-height: 45px;
  text-align: center;
  color: #000;
}
.credits span {
  height: 42px;
  background: rgba(245, 245, 245, 0.7);
}
.keys { width: 294px; }
.data { width: 257px; }
.terms { width: 118px; }
.legend {
  box-sizing: border-box;
  width: 1044px;
  height: 270px;
  margin-top: 144px;
  padding: 51px 48px;
  border: 6px solid rgba(255, 255, 255, 0.5);
  border-radius: 15px;
  background: rgba(255, 255, 255, 0.3);
  display: grid;
  grid-template-columns: 382px 1fr;
  grid-auto-rows: 51px;
  row-gap: 30px;
  font-size: 48px;
  line-height: 51px;
  color: #fff;
}
.item {
  display: flex;
  align-items: center;
  gap: 24px;
}
.dot {
  box-sizing: border-box;
  width: 51px;
  height: 51px;
  border: 3px solid rgba(255, 255, 255, 0.5);
  border-radius: 50%;
  background-clip: border-box;
}
.home {
  width: 417px;
  height: 15px;
  margin-top: 168px;
  border-radius: 8px;
  background: #fff;
}
</style>
